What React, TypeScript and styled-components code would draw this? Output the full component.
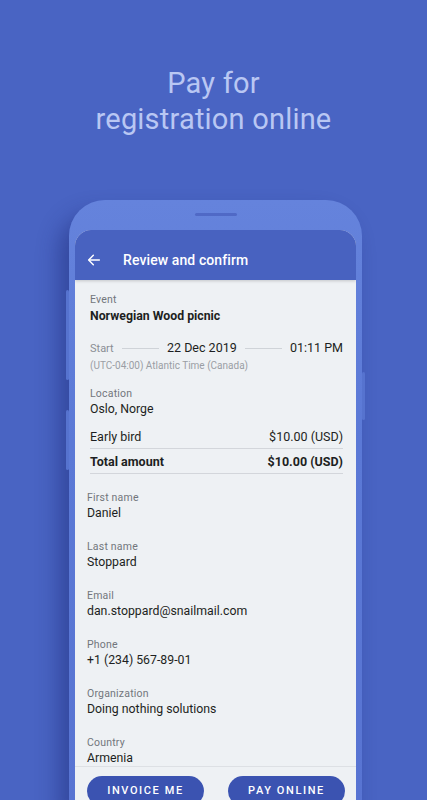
import React from "react";
import styled, { createGlobalStyle } from "styled-components";

const Global = createGlobalStyle`
  html, body { margin: 0; padding: 0; }
  body { font-family: Roboto, "Noto Sans", Arial, sans-serif; background: #4964c3; }
`;

const Page = styled.div`
  width: 427px;
  height: 800px;
  overflow: hidden;
  background: #4964c3;
  display: flex;
  flex-direction: column;
  align-items: center;
`;

const Headline = styled.h1`
  margin: 65px 0 0;
  font-weight: 400;
  font-size: 29px;
  line-height: 36px;
  color: #b9c7f3;
  text-align: center;
  letter-spacing: 0.2px;
`;

const Phone = styled.div`
  position: relative;
  margin: 63px 0 0 4px;
  width: 293px;
  flex: 1;
  box-sizing: border-box;
  padding: 0 6px;
  border-radius: 36px 36px 0 0;
  background: linear-gradient(180deg, #6583dc 0%, #5b79d6 40%, #5874d2 100%);
  box-shadow: -10px 14px 22px rgba(25, 35, 110, 0.45);
  display: flex;
  flex-direction: column;
`;

const SideKey = styled.div<{ $side: "left" | "right"; $top: number; $h: number }>`
  position: absolute;
  ${(p) => (p.$side === "left" ? "left: -3px;" : "right: -3px;")}
  top: ${(p) => p.$top}px;
  height: ${(p) => p.$h}px;
  width: 3px;
  border-radius: 2px;
  background: #5673cf;
`;

const Bezel = styled.div`
  height: 30px;
  display: flex;
  justify-content: center;
  align-items: flex-start;
`;

const Earpiece = styled.div`
  margin-top: 13px;
  width: 42px;
  height: 3px;
  border-radius: 2px;
  background: #5069c6;
`;

const Screen = styled.div`
  flex: 1;
  border-radius: 16px 16px 0 0;
  overflow: hidden;
  background: #eef1f4;
  display: flex;
  flex-direction: column;
`;

const AppBar = styled.div`
  height: 50px;
  box-sizing: border-box;
  padding: 10px 0 0 11px;
  background: #4862c0;
  display: flex;
  align-items: center;
  color: #ffffff;
  box-shadow: 0 1px 3px rgba(0, 0, 0, 0.18);
  position: relative;
  z-index: 1;
`;

const Back = styled.span`
  display: flex;
  width: 16px;
  height: 16px;
`;

const BarTitle = styled.div`
  margin-left: 21px;
  font-size: 14px;
  font-weight: 500;
  letter-spacing: 0.1px;
`;

const Body = styled.div`
  flex: 1;
  display: flex;
  flex-direction: column;
`;

const Section = styled.div<{ $pl: number; $pt: number }>`
  padding: ${(p) => p.$pt}px 13px 0 ${(p) => p.$pl}px;
  display: flex;
  flex-direction: column;
`;

const Label = styled.div<{ $mt?: number }>`
  margin-top: ${(p) => p.$mt ?? 0}px;
  font-size: 10.5px;
  line-height: 14px;
  color: #72767c;
  letter-spacing: 0.2px;
`;

const Value = styled.div<{ $bold?: boolean; $lh?: number }>`
  font-size: 12.3px;
  line-height: ${(p) => p.$lh ?? 16}px;
  font-weight: ${(p) => (p.$bold ? 700 : 400)};
  color: #1d1f22;
`;

const StartRow = styled.div`
  margin-top: 12px;
  height: 20px;
  display: flex;
  align-items: center;
  font-size: 12.5px;
  color: #1d1f22;
`;

const StartLabel = styled.span`
  font-size: 11px;
  color: #8a8e94;
  margin-top: 2px;
`;

const Rule = styled.span`
  flex: 1;
  height: 1px;
  background: #cfd3d8;
  margin: 2px 8px 0;
`;

const Zone = styled.div`
  margin-top: 2px;
  font-size: 10px;
  line-height: 14px;
  color: #9a9ea4;
`;

const PriceRow = styled.div<{ $bold?: boolean; $mt?: number }>`
  margin-top: ${(p) => p.$mt ?? 0}px;
  height: 24px;
  display: flex;
  align-items: center;
  justify-content: space-between;
  border-bottom: 1px solid #d3d6db;
  font-size: 12.5px;
  font-weight: ${(p) => (p.$bold ? 700 : 400)};
  color: #1d1f22;
`;

const Footer = styled.div`
  margin-top: auto;
  border-top: 1px solid #dde0e4;
  padding: 9px 11px 0 12px;
  display: flex;
  justify-content: space-between;
`;

const Pill = styled.button`
  width: 117px;
  height: 30px;
  border: none;
  border-radius: 15px;
  background: #3b53b1;
  color: #ffffff;
  font-family: Roboto, Arial, sans-serif;
  font-size: 11px;
  font-weight: 500;
  letter-spacing: 1.6px;
  padding: 0;
  padding-bottom: 2px;
`;

const fields: [string, string][] = [
  ["First name", "Daniel"],
  ["Last name", "Stoppard"],
  ["Email", "dan.stoppard@snailmail.com"],
  ["Phone", "+1 (234) 567-89-01"],
  ["Organization", "Doing nothing solutions"],
  ["Country", "Armenia"],
];

export default function App() {
  return (
    <>
      <Global />
      <Page>
        <Headline>
          Pay for
          <br />
          registration online
        </Headline>
        <Phone>
          <SideKey $side="left" $top={90} $h={90} />
          <SideKey $side="left" $top={210} $h={60} />
          <SideKey $side="right" $top={172} $h={48} />
          <Bezel>
            <Earpiece />
          </Bezel>
          <Screen>
            <AppBar>
              <Back>
                <svg width="16" height="16" viewBox="0 0 24 24" fill="none" stroke="#fff" strokeWidth="2.2" strokeLinecap="round" strokeLinejoin="round">
                  <path d="M20 12H5" />
                  <path d="M11 5l-7 7 7 7" />
                </svg>
              </Back>
              <BarTitle>Review and confirm</BarTitle>
            </AppBar>
            <Body>
              <Section $pl={15} $pt={13}>
                <Label>Event</Label>
                <Value $bold $lh={18}>Norwegian Wood picnic</Value>
                <StartRow>
                  <StartLabel>Start</StartLabel>
                  <Rule />
                  <span>22 Dec 2019</span>
                  <Rule />
                  <span>01:11 PM</span>
                </StartRow>
                <Zone>(UTC-04:00) Atlantic Time (Canada)</Zone>
                <Label $mt={14}>Location</Label>
                <Value>Oslo, Norge</Value>
                <PriceRow $mt={7}>
                  <span>Early bird</span>
                  <span>$10.00 (USD)</span>
                </PriceRow>
                <PriceRow $bold>
                  <span>Total amount</span>
                  <span>$10.00 (USD)</span>
                </PriceRow>
              </Section>
              <Section $pl={12} $pt={17}>
                {fields.map(([l, v], i) => (
                  <React.Fragment key={l}>
                    <Label $mt={i === 0 ? 0 : 19}>{l}</Label>
                    <Value>{v}</Value>
                  </React.Fragment>
                ))}
              </Section>
              <Footer>
                <Pill>INVOICE ME</Pill>
                <Pill>PAY ONLINE</Pill>
              </Footer>
            </Body>
          </Screen>
        </Phone>
      </Page>
    </>
  );
}
